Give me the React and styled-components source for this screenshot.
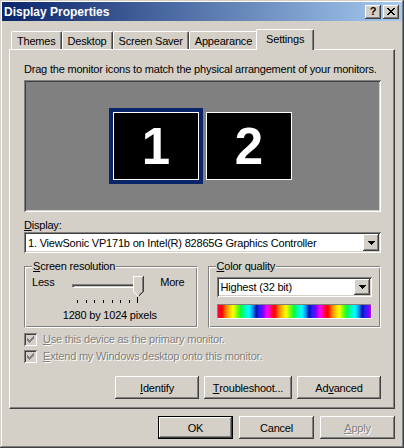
import React from 'react';
import styled, { createGlobalStyle, css } from 'styled-components';

const GlobalStyle = createGlobalStyle`
  html, body {
    margin: 0;
    padding: 0;
    background: #d4d0c8;
  }
  body {
    font-family: "Liberation Sans", Arial, sans-serif;
    font-size: 11px;
    letter-spacing: -0.2px;
    color: #000;
  }
  * {
    box-sizing: border-box;
  }
`;

const raised = css`
  box-shadow: inset -1px -1px #404040, inset 1px 1px #fff, inset -2px -2px #808080, inset 2px 2px #d4d0c8;
`;

const sunken = css`
  box-shadow: inset 1px 1px #808080, inset -1px -1px #fff, inset 2px 2px #404040, inset -2px -2px #d4d0c8;
`;

const Window = styled.div`
  width: 404px;
  height: 448px;
  padding: 2px;
  background: #d4d0c8;
  box-shadow: inset -1px -1px #404040, inset 1px 1px #d4d0c8, inset -2px -2px #808080, inset 2px 2px #fff;
  display: flex;
  flex-direction: column;
`;

const TitleBar = styled.div`
  height: 19px;
  display: flex;
  align-items: center;
  justify-content: space-between;
  padding: 0 3px 0 2px;
  background: linear-gradient(to right, #0a246a, #a6caf0);
`;

const Title = styled.span`
  color: #fff;
  font-weight: bold;
  font-size: 12px;
  letter-spacing: 0;
`;

const CapButtons = styled.div`
  display: flex;
  gap: 2px;
`;

const CapButton = styled.div`
  width: 16px;
  height: 14px;
  background: #d4d0c8;
  ${raised};
  display: flex;
  align-items: center;
  justify-content: center;
  font-weight: bold;
  font-size: 11px;
  line-height: 1;
  padding-bottom: 1px;
`;

const Body = styled.div`
  flex: 1;
  display: flex;
  flex-direction: column;
  padding: 8px 7px 0 7px;
`;

const TabStrip = styled.div`
  height: 20px;
  display: flex;
  align-items: flex-end;
  padding-left: 2px;
  position: relative;
  z-index: 1;
`;

const Tab = styled.div`
  height: ${(p) => (p.$active ? '21px' : '18px')};
  margin: ${(p) => (p.$active ? '0 -2px -1px -2px' : '0')};
  padding: 0 ${(p) => (p.$active ? '9px' : '5px')} ${(p) => (p.$active ? '2px' : '0')};
  display: flex;
  align-items: center;
  flex-shrink: 0;
  background: #d4d0c8;
  border-top: 1px solid #fff;
  border-left: 1px solid #fff;
  border-right: 1px solid #404040;
  border-radius: 2px 2px 0 0;
  box-shadow: inset -1px 0 #808080;
  position: relative;
  z-index: ${(p) => (p.$active ? 2 : 1)};
`;

const Panel = styled.div`
  height: 360px;
  background: #d4d0c8;
  border-top: 1px solid #fff;
  border-left: 1px solid #fff;
  border-right: 1px solid #404040;
  border-bottom: 1px solid #404040;
  box-shadow: inset -1px -1px #808080;
  padding: 13px 13px 0 14px;
  display: flex;
  flex-direction: column;
`;

const Text = styled.div`
  line-height: 13px;
  white-space: nowrap;
`;

const MonitorArea = styled.div`
  margin-top: 4px;
  height: 132px;
  background: #808080;
  ${sunken};
  display: flex;
  align-items: center;
  justify-content: center;
  gap: 7px;
`;

const Screen = styled.div`
  width: 86px;
  height: 68px;
  background: #000;
  border: 1px solid #fff;
  outline: ${(p) => (p.$selected ? '4px solid #0a246a' : 'none')};
  color: #fff;
  font-weight: bold;
  font-size: 51px;
  letter-spacing: 0;
  line-height: 1;
  display: flex;
  align-items: center;
  justify-content: center;
`;

const FieldLabel = styled(Text)`
  margin-top: 7px;
`;

const SelectBox = styled.div`
  height: ${(p) => p.$h}px;
  background: #fff;
  ${sunken};
  padding: 2px;
  display: flex;
  align-items: center;
`;

const SelectValue = styled.span`
  flex: 1;
  padding-left: 2px;
  white-space: nowrap;
  overflow: hidden;
`;

const ArrowButton = styled.div`
  width: 16px;
  height: 100%;
  background: #d4d0c8;
  ${raised};
  display: flex;
  align-items: center;
  justify-content: center;
`;

const Groups = styled.div`
  margin-top: 13px;
  display: grid;
  grid-template-columns: 1fr 1fr;
  gap: 10px;
`;

const GroupBox = styled.div`
  position: relative;
  height: 62px;
  border-top: 1px solid #808080;
  border-left: 1px solid #808080;
  border-bottom: 1px solid #fff;
  border-right: 1px solid #fff;
  box-shadow: inset 1px 1px #fff, inset -1px -1px #808080;
  padding: ${(p) => p.$pad};
  display: flex;
  flex-direction: column;
`;

const GroupLabel = styled.span`
  position: absolute;
  top: -7px;
  left: 7px;
  padding: 0 1px;
  line-height: 13px;
  background: #d4d0c8;
`;

const SliderRow = styled.div`
  display: grid;
  grid-template-columns: 1fr 72px 1fr;
  align-items: start;
`;

const SideLabel = styled.span`
  line-height: 13px;
  text-align: ${(p) => p.$align};
`;

const Slider = styled.div`
  position: relative;
  height: 27px;
`;

const Track = styled.div`
  margin-top: 8px;
  height: 4px;
  border-top: 1px solid #808080;
  border-left: 1px solid #808080;
  border-bottom: 1px solid #fff;
  border-right: 1px solid #fff;
  box-shadow: inset 1px 1px #404040;
`;

const Thumb = styled.svg`
  position: absolute;
  top: 0;
  right: 0;
`;

const Ticks = styled.div`
  margin-top: 9px;
  height: 6px;
  padding: 0 6px 0 5px;
  display: flex;
  align-items: flex-end;
  justify-content: space-between;
`;

const Tick = styled.div`
  width: 1px;
  height: ${(p) => (p.$long ? '6px' : '3px')};
  background: #000;
`;

const PixelText = styled(Text)`
  margin-top: 6px;
  text-align: center;
  padding-left: 3px;
`;

const ColorBar = styled.div`
  margin-top: 7px;
  height: 15px;
  border-top: 1px solid #808080;
  border-left: 1px solid #808080;
  border-bottom: 1px solid #fff;
  border-right: 1px solid #fff;
  background: repeating-linear-gradient(
    to right,
    #ff0040 0px,
    #ff0000 4px,
    #ff8000 8px,
    #ffd000 12px,
    #ffff00 15px,
    #80ff00 19px,
    #00ff40 23px,
    #00ffc0 27px,
    #00ffff 31px,
    #0090ff 35px,
    #0010a0 38px,
    #2020ff 41px,
    #8000ff 45px,
    #ff00ff 49px,
    #ff0080 53px
  );
`;

const CheckRow = styled.div`
  height: 17px;
  display: flex;
  align-items: center;
  gap: 6px;
  margin-top: ${(p) => p.$mt || 0}px;
`;

const CheckBox = styled.div`
  width: 13px;
  height: 13px;
  background: #d4d0c8;
  ${sunken};
  display: flex;
  align-items: center;
  justify-content: center;
`;

const Disabled = styled.span`
  color: #808080;
  text-shadow: 1px 1px 0 #fff;
  line-height: 13px;
  white-space: nowrap;
`;

const ButtonRow = styled.div`
  margin-top: ${(p) => p.$mt}px;
  display: flex;
  justify-content: flex-end;
  gap: ${(p) => p.$gap}px;
`;

const Button = styled.div`
  width: ${(p) => p.$w}px;
  height: 23px;
  background: #d4d0c8;
  ${raised};
  ${(p) =>
    p.$default &&
    css`
      box-shadow: inset 0 0 0 1px #000, inset -2px -2px #404040, inset 2px 2px #fff, inset -3px -3px #808080,
        inset 3px 3px #d4d0c8;
    `}
  display: flex;
  align-items: center;
  justify-content: center;
  white-space: nowrap;
  color: ${(p) => (p.$disabled ? '#808080' : '#000')};
  text-shadow: ${(p) => (p.$disabled ? '1px 1px 0 #fff' : 'none')};
`;

const CloseGlyph = () => (
  <svg width="8" height="7" viewBox="0 0 8 7" shapeRendering="crispEdges">
    <path
      fill="#000"
      d="M0 0h2v1H0zM6 0h2v1H6zM1 1h2v1H1zM5 1h2v1H5zM2 2h4v1H2zM3 3h2v1H3zM2 4h4v1H2zM1 5h2v1H1zM5 5h2v1H5zM0 6h2v1H0zM6 6h2v1H6z"
    />
  </svg>
);

const DownArrow = () => (
  <svg width="7" height="4" viewBox="0 0 7 4" shapeRendering="crispEdges">
    <path fill="#000" d="M0 0h7v1H0zM1 1h5v1H1zM2 2h3v1H2zM3 3h1v1H3z" />
  </svg>
);

const CheckGlyph = () => (
  <svg width="7" height="7" viewBox="0 0 7 7" shapeRendering="crispEdges">
    <path
      fill="#808080"
      d="M6 0h1v1H6zM5 1h2v1H5zM0 2h1v1H0zM4 2h3v1H4zM0 3h2v1H0zM3 3h3v1H3zM0 4h5v1H0zM1 5h3v1H1zM2 6h1v1H2z"
    />
  </svg>
);

const ThumbGlyph = () => (
  <Thumb width="11" height="21" viewBox="0 0 11 21" shapeRendering="crispEdges">
    <polygon points="0,0 11,0 11,16 5.5,21 0,16" fill="#d4d0c8" />
    <polyline points="0.5,16 0.5,0.5 10,0.5" fill="none" stroke="#fff" />
    <polyline points="0.5,15.5 5.5,20.5" fill="none" stroke="#fff" />
    <polyline points="10.5,0 10.5,15.5 5.5,20.5" fill="none" stroke="#404040" />
    <polyline points="9.5,1 9.5,15.5 5.5,19.5" fill="none" stroke="#808080" />
  </Thumb>
);

const Select = ({ value, height }) => (
  <SelectBox $h={height}>
    <SelectValue>{value}</SelectValue>
    <ArrowButton>
      <DownArrow />
    </ArrowButton>
  </SelectBox>
);

const tabs = ['Themes', 'Desktop', 'Screen Saver', 'Appearance', 'Settings'];

export default function App() {
  return (
    <>
      <GlobalStyle />
      <Window>
        <TitleBar>
          <Title>Display Properties</Title>
          <CapButtons>
            <CapButton>?</CapButton>
            <CapButton>
              <CloseGlyph />
            </CapButton>
          </CapButtons>
        </TitleBar>
        <Body>
          <TabStrip>
            {tabs.map((t) => (
              <Tab key={t} $active={t === 'Settings'}>
                {t}
              </Tab>
            ))}
          </TabStrip>
          <Panel>
            <Text>Drag the monitor icons to match the physical arrangement of your monitors.</Text>
            <MonitorArea>
              <Screen $selected>1</Screen>
              <Screen>2</Screen>
            </MonitorArea>
            <FieldLabel>
              <u>D</u>isplay:
            </FieldLabel>
            <Select height={21} value="1. ViewSonic VP171b on Intel(R) 82865G Graphics Controller" />
            <Groups>
              <GroupBox $pad="9px 12px 0 7px">
                <GroupLabel>
                  <u>S</u>creen resolution
                </GroupLabel>
                <SliderRow>
                  <SideLabel $align="left">Less</SideLabel>
                  <Slider>
                    <Track />
                    <ThumbGlyph />
                    <Ticks>
                      {Array.from({ length: 8 }).map((_, i) => (
                        <Tick key={i} $long={i === 7} />
                      ))}
                    </Ticks>
                  </Slider>
                  <SideLabel $align="right">More</SideLabel>
                </SliderRow>
                <PixelText>1280 by 1024 pixels</PixelText>
              </GroupBox>
              <GroupBox $pad="10px 8px 0 8px">
                <GroupLabel>
                  <u>C</u>olor quality
                </GroupLabel>
                <Select height={20} value="Highest (32 bit)" />
                <ColorBar />
              </GroupBox>
            </Groups>
            <CheckRow $mt={3}>
              <CheckBox>
                <CheckGlyph />
              </CheckBox>
              <Disabled>
                <u>U</u>se this device as the primary monitor.
              </Disabled>
            </CheckRow>
            <CheckRow>
              <CheckBox>
                <CheckGlyph />
              </CheckBox>
              <Disabled>
                <u>E</u>xtend my Windows desktop onto this monitor.
              </Disabled>
            </CheckRow>
            <ButtonRow $mt={11} $gap={5}>
              <Button $w={84}>
                <u>I</u>dentify
              </Button>
              <Button $w={88}>
                <u>T</u>roubleshoot...
              </Button>
              <Button $w={84}>
                Ad<u>v</u>anced
              </Button>
            </ButtonRow>
          </Panel>
          <ButtonRow $mt={7} $gap={6}>
            <Button $w={75} $default>
              OK
            </Button>
            <Button $w={75}>Cancel</Button>
            <Button $w={75} $disabled>
              <u>A</u>pply
            </Button>
          </ButtonRow>
        </Body>
      </Window>
    </>
  );
}
